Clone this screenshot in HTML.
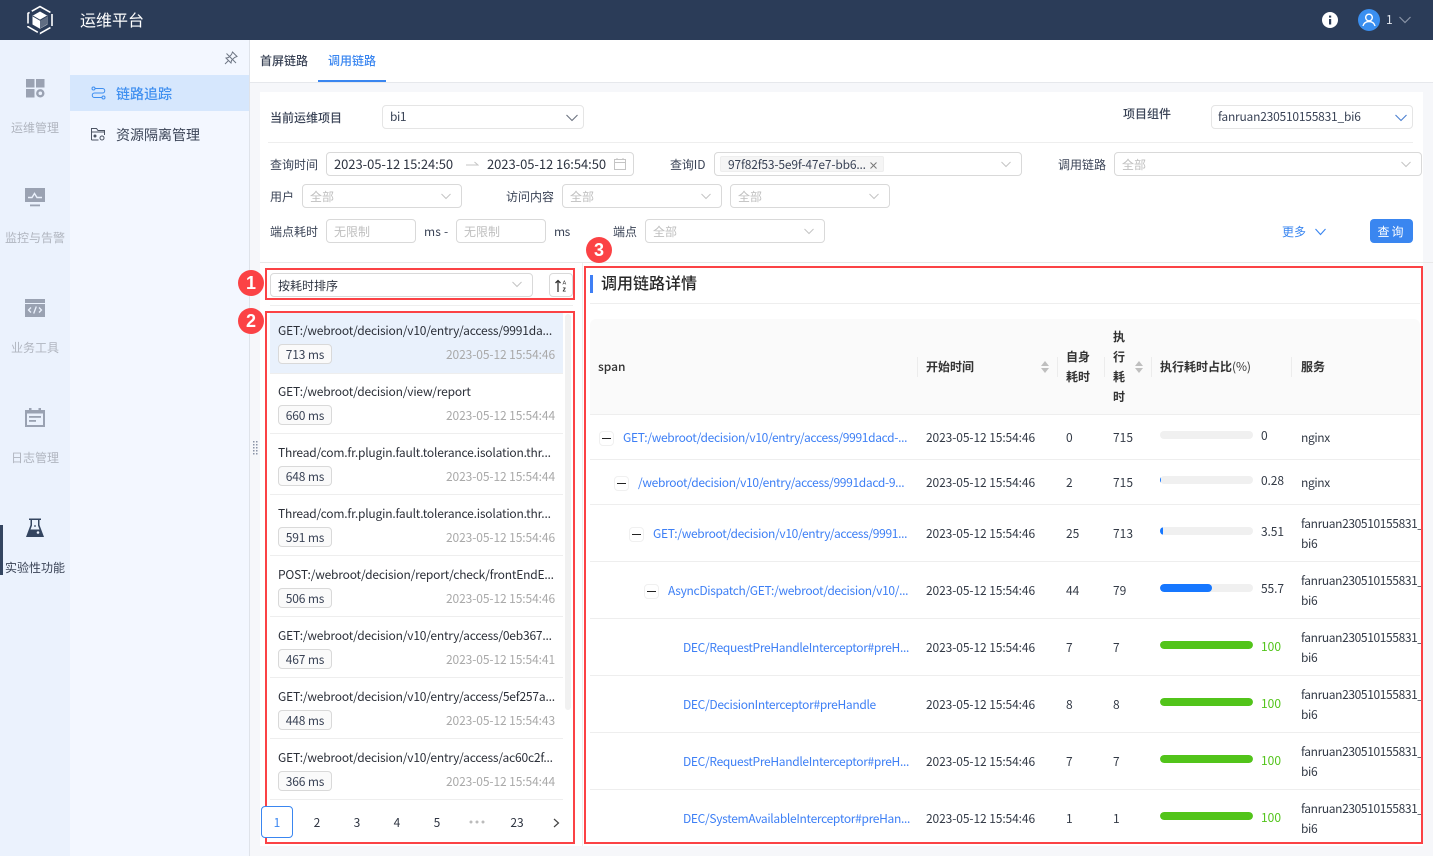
<!DOCTYPE html>
<html lang="zh"><head><meta charset="utf-8"><title>运维平台</title>
<style>
html,body{margin:0;padding:0}
body{width:1433px;height:856px;position:relative;overflow:hidden;background:#f6f7fa;font:12px/20px "Noto Sans CJK SC","Liberation Sans",sans-serif;color:#3a4356}
.a,.t,.b,.s{position:absolute}
.t{white-space:nowrap;line-height:20px}
.b{box-sizing:border-box;border:1px solid #d9d9d9;border-radius:4px;background:#fff}
.s{box-sizing:border-box;border:1px solid #d9d9d9;border-radius:4px;background:#fff;padding-left:7px;line-height:24px;color:#bfbfbf;height:24px;overflow:hidden}
.s svg{position:absolute;right:9px;top:7px}
.lab{color:#3a4356}
.red{position:absolute;box-sizing:border-box;border:2px solid #fb4245;z-index:5}
.badge{position:absolute;width:26px;height:26px;border-radius:50%;background:#fb4245;color:#fff;font:bold 18px/26px "Liberation Sans",sans-serif;text-align:center;z-index:6}
.nav{position:absolute;left:0;width:70px;text-align:center;color:#b0b5bf;white-space:nowrap;line-height:20px}
.line{position:absolute;background:#eeeeee;height:1px}
.title{color:#2b2f38;left:278px;letter-spacing:-.19px}
.tag{position:absolute;left:278px;width:54px;height:20px;box-sizing:border-box;border:1px solid #d9d9d9;border-radius:4px;background:#fafafa;text-align:center;line-height:19px;color:#3a4356;letter-spacing:-.15px}
.date{position:absolute;right:878px;color:#a9a9a9;white-space:nowrap;line-height:20px;letter-spacing:-.1px}
.pg{position:absolute;top:813px;width:30px;text-align:center;line-height:20px;color:#2f3542}
.th{position:absolute;font-weight:700;color:#333;line-height:20px;white-space:nowrap}
.lnk{color:#3d7ff5;letter-spacing:-.32px}
.c{color:#333a46}
.d{letter-spacing:-.1px}
.ex{position:absolute;box-sizing:border-box;width:15px;height:15px;border:1px solid #f0f0f0;border-radius:4px;background:#fff}
.ex:after{content:"";position:absolute;left:2px;right:2px;top:6px;height:1px;background:#222}
.bar{position:absolute;left:1160px;width:93px;height:8px;border-radius:4px;background:#f0f0f0;overflow:hidden}
.bar i{display:block;height:8px;background:#1677ff;border-radius:4px}
.bar i.g{background:#52c41a}
.sv{position:absolute;left:1301px;width:121px;overflow:hidden;white-space:nowrap;line-height:20px;color:#333a46;letter-spacing:-.38px}
.sep{position:absolute;width:1px;height:20px;top:357px;background:#ececec}
</style></head><body>

<div class="a" style="left:0;top:0;width:1433px;height:40px;background:#2b3c58"></div>
<svg class="a" style="left:26px;top:5px" width="28" height="30" viewBox="0 0 28 30" fill="none"><path d="M14 1.5 26 8.3V21.7L14 28.5 2 21.7V8.3Z" stroke="#fff" stroke-width="1.6" stroke-dasharray="12 2.5"/><path d="M14 6.5 21.5 10.8V19.5L14 23.8 6.5 19.5V10.8Z" fill="#fff"/><path d="M14 15.3V23.5L21.3 19.3V11Z" fill="#2b3c58" opacity=".75"/><path d="M6.8 11 14 15.2 21.2 11" stroke="#2b3c58" stroke-width="1"/></svg>
<div class="t" style="left:80px;top:9px;font-size:16px;color:#fff">运维平台</div>
<svg class="a" style="left:1322px;top:12px" width="16" height="16" viewBox="0 0 16 16"><circle cx="8" cy="8" r="8" fill="#fff"/><rect x="7" y="7" width="2.2" height="5.5" fill="#2b3c58"/><rect x="7" y="3.6" width="2.2" height="2" fill="#2b3c58"/></svg>
<svg class="a" style="left:1358px;top:9px" width="22" height="22" viewBox="0 0 22 22" fill="none"><circle cx="11" cy="11" r="11" fill="#3a8ff0"/><circle cx="11" cy="8.5" r="3.3" stroke="#fff" stroke-width="1.4"/><path d="M5 17c.8-3 3-4.4 6-4.4s5.200 1.400 6 4.400" stroke="#fff" stroke-width="1.4"/></svg>
<div class="t" style="left:1386px;top:10px;color:#e4e8ef">1</div>
<svg class="a" style="left:1399px;top:16px" width="12" height="8" viewBox="0 0 12 8" fill="none"><path d="M.5 1 6 6.500 11.500 1" stroke="#8a94a6" stroke-width="1.200"/></svg>

<div class="a" style="left:0;top:40px;width:70px;height:816px;background:#ebf2fd"></div>
<div class="a" style="left:70px;top:40px;width:179px;height:816px;background:#f3f7ff"></div>
<div class="a" style="left:249px;top:40px;width:1px;height:816px;background:#dfe3ea"></div>

<svg class="a" style="left:25px;top:78px" width="21" height="20" viewBox="0 0 21 20" fill="#9aa2b2"><rect x="1" y="1" width="8.500" height="8.500"/><rect x="11" y="1" width="8.500" height="8.500"/><rect x="1" y="11" width="8.500" height="8.500"/><circle cx="15.300" cy="15.300" r="3" fill="none" stroke="#9aa2b2" stroke-width="2.400"/></svg>
<div class="nav" style="top:118px">运维管理</div>
<svg class="a" style="left:25px;top:188px" width="20" height="20" viewBox="0 0 20 20"><rect width="20" height="14" fill="#9aa2b2"/><path d="M3 9.500h4l2.500-4 2.500 4h5" fill="none" stroke="#ebf2fd" stroke-width="1.400"/><rect x="5" y="16.500" width="10" height="1.800" fill="#9aa2b2"/></svg>
<div class="nav" style="top:228px">监控与告警</div>
<svg class="a" style="left:25px;top:298px" width="20" height="20" viewBox="0 0 20 20" fill="none"><rect y="1" width="20" height="18" fill="#9aa2b2"/><rect y="5" width="20" height="1" fill="#ebf2fd"/><path d="M6 9.500 3.500 12 6 14.500M14 9.500l2.500 2.500-2.500 2.500M11.300 8.500 8.700 15.500" stroke="#ebf2fd" stroke-width="1.300"/></svg>
<div class="nav" style="top:338px">业务工具</div>
<svg class="a" style="left:25px;top:407px" width="20" height="21" viewBox="0 0 20 21" fill="none"><rect y="3" width="20" height="17" fill="#9aa2b2"/><rect x="4" y="1" width="2.500" height="4" fill="#9aa2b2"/><rect x="13.500" y="1" width="2.500" height="4" fill="#9aa2b2"/><rect x="2" y="6.500" width="16" height="11.500" fill="#ebf2fd"/><rect x="4" y="9" width="12" height="1.800" fill="#9aa2b2"/><rect x="4" y="13" width="7" height="1.800" fill="#9aa2b2"/></svg>
<div class="nav" style="top:448px">日志管理</div>
<div class="a" style="left:0;top:525px;width:3px;height:50px;background:#344560"></div>
<svg class="a" style="left:26px;top:518px" width="18" height="20" viewBox="0 0 18 20"><path d="M3 .500h12v1.500h-1.500v5L18 19H0L4.500 7V2H3Z" fill="#344560"/><path d="M6 2h6v5.500l1.500 4H4.500l1.500-4Z" fill="#ebf2fd"/><circle cx="9" cy="8" r=".9" fill="#344560"/><circle cx="12" cy="14.500" r="1.300" fill="#ebf2fd"/></svg>
<div class="nav" style="top:558px;color:#3a4356">实验性功能</div>

<svg class="a" style="left:224px;top:51px" width="14" height="14" viewBox="0 0 14 14" fill="none" stroke="#6f7785" stroke-width="1"><path d="M8.500 1 13 5.500 10.500 6.500 7.500 9.500 7 12 2 7 4.500 6.500 7.500 3.500Z"/><path d="M4.500 9.500 1 13"/><path d="M2.500 2.500 12 12"/></svg>
<div class="a" style="left:70px;top:75px;width:179px;height:36px;background:#d6e7fd"></div>
<svg class="a" style="left:91px;top:86px" width="15" height="14" viewBox="0 0 15 14" fill="none" stroke="#3f8ff0" stroke-width="1"><circle cx="2.500" cy="2.500" r="1.500"/><path d="M4 2.500h7.500a2 2 0 0 1 0 4.500H3.500a2 2 0 0 0 0 4.500H11"/><circle cx="12.500" cy="11.500" r="1.500"/></svg>
<div class="t" style="left:116px;top:84px;font-size:14px;color:#3f8ff0;font-weight:500">链路追踪</div>
<svg class="a" style="left:91px;top:127px" width="14" height="14" viewBox="0 0 14 14" fill="none" stroke="#4b5363" stroke-width="1"><path d="M.500 13V1.500h5l1.500 2h6.500V8M.500 13h7"/><path d="M.500 5h13"/><circle cx="4" cy="9" r="1" fill="#4b5363"/><circle cx="11" cy="11" r="2"/></svg>
<div class="t" style="left:116px;top:125px;font-size:14px">资源隔离管理</div>

<div class="a" style="left:250px;top:40px;width:1183px;height:42px;background:#fff"></div>
<div class="a" style="left:250px;top:82px;width:1183px;height:1px;background:#e6e8ec"></div>
<div class="t" style="left:260px;top:51px;font-weight:500;color:#3a4356">首屏链路</div>
<div class="t" style="left:328px;top:51px;font-weight:500;color:#3a86f0">调用链路</div>
<div class="a" style="left:318px;top:80px;width:68px;height:2px;background:#3a86f0"></div>

<div class="a" style="left:260px;top:92px;width:1163px;height:754px;background:#fff"></div>

<div class="t lab" style="left:270px;top:108px;font-weight:500">当前运维项目</div>
<div class="s" style="left:382px;top:105px;width:202px;color:#3a4356;border-color:#e5e5e5;line-height:22px;letter-spacing:-.4px">bi1<svg width="12" height="8" viewBox="0 0 12 8" fill="none" style="right:5px;top:8px"><path d="M.5 1 6 6.500 11.500 1" stroke="#6b7280" stroke-width="1.100"/></svg></div>
<div class="t lab" style="left:1123px;top:104px;font-weight:500">项目组件</div>
<div class="s" style="left:1211px;top:105px;width:202px;color:#3a4356;border-color:#e5e5e5;padding-left:6px;line-height:22px;letter-spacing:-.22px">fanruan230510155831_bi6<svg width="12" height="8" viewBox="0 0 12 8" fill="none" style="right:5px;top:8px"><path d="M.5 1 6 6.500 11.500 1" stroke="#4a7fd0" stroke-width="1.100"/></svg></div>
<div class="a" style="left:268px;top:142px;width:1145px;height:1px;background:#eeeeee"></div>

<div class="t lab" style="left:270px;top:155px">查询时间</div>
<div class="b" style="left:326px;top:152px;width:308px;height:24px"></div>
<div class="t" style="left:334px;top:154px;color:#2f3542;font-size:13px;letter-spacing:-.06px">2023-05-12 15:24:50</div>
<div class="t" style="left:487px;top:154px;color:#2f3542;font-size:13px;letter-spacing:-.06px">2023-05-12 16:54:50</div>
<svg class="a" style="left:466px;top:160px" width="13" height="8" viewBox="0 0 13 8" fill="none"><path d="M0 5h12L8.500 2" stroke="#c4c4c4"/></svg>
<svg class="a" style="left:614px;top:158px" width="12" height="12" viewBox="0 0 12 12" fill="none" stroke="#c4c4c4"><rect x=".5" y="1.500" width="11" height="10"/><path d="M.5 4.500h11M3 0v2M9 0v2"/></svg>
<div class="t lab" style="left:670px;top:155px;letter-spacing:-.1px">查询ID</div>
<div class="s" style="left:714px;top:152px;width:308px"><svg width="10" height="7" viewBox="0 0 10 7" fill="none" style="top:8px;right:10px"><path d="M.5 1 5 5.500 9.500 1" stroke="#c4c4c4"/></svg></div>
<div class="a" style="left:720px;top:156px;width:164px;height:16px;background:#f5f5f5;border:1px solid #eee;box-sizing:border-box;border-radius:2px"></div>
<div class="t" style="left:728px;top:155px;color:#3a4356;letter-spacing:-.17px">97f82f53-5e9f-47e7-bb6...</div>
<svg class="a" style="left:870px;top:162px" width="7" height="7" viewBox="0 0 7 7" fill="none"><path d="M.5.500l6 6M6.500.500l-6 6" stroke="#777"/></svg>
<div class="t lab" style="left:1058px;top:155px">调用链路</div>
<div class="s" style="left:1114px;top:152px;width:308px">全部<svg width="10" height="7" viewBox="0 0 10 7" fill="none" style="top:8px;right:10px"><path d="M.5 1 5 5.500 9.500 1" stroke="#c4c4c4"/></svg></div>

<div class="t lab" style="left:270px;top:187px">用户</div>
<div class="s" style="left:302px;top:184px;width:160px">全部<svg width="10" height="7" viewBox="0 0 10 7" fill="none" style="top:8px;right:10px"><path d="M.5 1 5 5.500 9.500 1" stroke="#c4c4c4"/></svg></div>
<div class="t lab" style="left:506px;top:187px">访问内容</div>
<div class="s" style="left:562px;top:184px;width:160px">全部<svg width="10" height="7" viewBox="0 0 10 7" fill="none" style="top:8px;right:10px"><path d="M.5 1 5 5.500 9.500 1" stroke="#c4c4c4"/></svg></div>
<div class="s" style="left:730px;top:184px;width:160px">全部<svg width="10" height="7" viewBox="0 0 10 7" fill="none" style="top:8px;right:10px"><path d="M.5 1 5 5.500 9.500 1" stroke="#c4c4c4"/></svg></div>

<div class="t lab" style="left:270px;top:222px">端点耗时</div>
<div class="s" style="left:326px;top:219px;width:90px">无限制</div>
<div class="t lab" style="left:424px;top:222px;letter-spacing:.2px">ms -</div>
<div class="s" style="left:456px;top:219px;width:90px">无限制</div>
<div class="t lab" style="left:554px;top:222px;letter-spacing:-.5px">ms</div>
<div class="t lab" style="left:613px;top:222px">端点</div>
<div class="s" style="left:645px;top:219px;width:180px">全部<svg width="10" height="7" viewBox="0 0 10 7" fill="none" style="top:8px;right:10px"><path d="M.5 1 5 5.500 9.500 1" stroke="#c4c4c4"/></svg></div>
<div class="t" style="left:1282px;top:222px;color:#3a86f0">更多</div>
<svg class="a" style="left:1315px;top:228px" width="11" height="8" viewBox="0 0 11 8" fill="none"><path d="M.5 1 5.500 6.500 10.500 1" stroke="#3a86f0" stroke-width="1.100"/></svg>
<div class="a" style="left:1370px;top:219px;width:43px;height:24px;background:#3a86f0;border-radius:4px;color:#fff;text-align:center;line-height:26px;letter-spacing:2px">查询</div>

<div class="a" style="left:260px;top:262px;width:1173px;height:1px;background:#e8e8e8"></div>
<div class="a" style="left:582px;top:263px;width:1px;height:583px;background:#eeeeee"></div>

<div class="s" style="left:270px;top:273px;width:263px;color:#2f3542">按耗时排序<svg width="10" height="7" viewBox="0 0 10 7" fill="none" style="top:7px;right:10px"><path d="M.5 1 5 5.500 9.500 1" stroke="#c4c4c4"/></svg></div>
<div class="b" style="left:549px;top:273px;width:24px;height:24px"></div>
<svg class="a" style="left:555px;top:279px" width="13" height="13" viewBox="0 0 13 13" fill="none"><path d="M3 13V1.500M.5 4 3 1.500 5.500 4" stroke="#333" stroke-width="1.300"/><text x="7.500" y="5.500" font-size="5.500" font-family="Liberation Sans" fill="#333">A</text><text x="7.500" y="12.500" font-size="7" font-weight="bold" font-family="Liberation Sans" fill="#333">z</text></svg>
<div class="line" style="left:270px;top:305px;width:303px"></div>

<div class="a" style="left:270px;top:313px;width:293px;height:60px;background:#e9f1fc"></div>
<div class="a" style="left:565px;top:314px;width:6px;height:396px;background:#f1f1f1;border-radius:3px"></div>

<div class="t title" style="top:321px">GET:/webroot/decision/v10/entry/access/9991da...</div>
<div class="tag" style="top:344px">713 ms</div><div class="date" style="top:345px">2023-05-12 15:54:46</div>
<div class="line" style="left:270px;top:373px;width:293px"></div>
<div class="t title" style="top:382px">GET:/webroot/decision/view/report</div>
<div class="tag" style="top:405px">660 ms</div><div class="date" style="top:406px">2023-05-12 15:54:44</div>
<div class="line" style="left:270px;top:433px;width:293px"></div>
<div class="t title" style="top:443px">Thread/com.fr.plugin.fault.tolerance.isolation.thr...</div>
<div class="tag" style="top:466px">648 ms</div><div class="date" style="top:467px">2023-05-12 15:54:44</div>
<div class="line" style="left:270px;top:494px;width:293px"></div>
<div class="t title" style="top:504px">Thread/com.fr.plugin.fault.tolerance.isolation.thr...</div>
<div class="tag" style="top:527px">591 ms</div><div class="date" style="top:528px">2023-05-12 15:54:46</div>
<div class="line" style="left:270px;top:555px;width:293px"></div>
<div class="t title" style="top:565px">POST:/webroot/decision/report/check/frontEndE...</div>
<div class="tag" style="top:588px">506 ms</div><div class="date" style="top:589px">2023-05-12 15:54:46</div>
<div class="line" style="left:270px;top:616px;width:293px"></div>
<div class="t title" style="top:626px">GET:/webroot/decision/v10/entry/access/0eb367...</div>
<div class="tag" style="top:649px">467 ms</div><div class="date" style="top:650px">2023-05-12 15:54:41</div>
<div class="line" style="left:270px;top:677px;width:293px"></div>
<div class="t title" style="top:687px">GET:/webroot/decision/v10/entry/access/5ef257a...</div>
<div class="tag" style="top:710px">448 ms</div><div class="date" style="top:711px">2023-05-12 15:54:43</div>
<div class="line" style="left:270px;top:738px;width:293px"></div>
<div class="t title" style="top:748px">GET:/webroot/decision/v10/entry/access/ac60c2f...</div>
<div class="tag" style="top:771px">366 ms</div><div class="date" style="top:772px">2023-05-12 15:54:44</div>
<div class="line" style="left:270px;top:799px;width:293px"></div>

<div class="a" style="left:261px;top:806px;width:32px;height:32px;box-sizing:border-box;border:1px solid #3a86f0;border-radius:4px;background:#fff;z-index:7;text-align:center;line-height:31px;color:#3a86f0">1</div>
<div class="pg" style="left:302px">2</div><div class="pg" style="left:342px">3</div><div class="pg" style="left:382px">4</div><div class="pg" style="left:422px">5</div>
<svg class="a" style="left:469px;top:820px" width="16" height="4" viewBox="0 0 16 4" fill="#bbb"><circle cx="2" cy="2" r="1.500"/><circle cx="8" cy="2" r="1.500"/><circle cx="14" cy="2" r="1.500"/></svg>
<div class="pg" style="left:502px">23</div>
<svg class="a" style="left:553px;top:818px" width="7" height="10" viewBox="0 0 7 10" fill="none"><path d="M1 1 5.500 5 1 9" stroke="#444" stroke-width="1.200"/></svg>

<div class="a" style="left:590px;top:275px;width:3px;height:18px;background:#3f7ff5"></div>
<div class="t" style="left:601px;top:272px;font-size:16px;font-weight:500;color:#262626">调用链路详情</div>
<div class="line" style="left:590px;top:303px;width:830px"></div>

<div class="a" style="left:590px;top:319px;width:830px;height:95px;background:#fafafa;border-radius:6px 6px 0 0;border-bottom:1px solid #eee"></div>
<div class="th" style="left:598px;top:357px;font-weight:500">span</div>
<div class="sep" style="left:917px"></div>
<div class="th" style="left:926px;top:357px">开始时间</div>
<svg class="a" style="left:1041px;top:361px" width="8" height="12" viewBox="0 0 8 12" fill="#bfbfbf"><path d="M4 0 8 5H0ZM4 12 0 7H8Z"/></svg>
<div class="sep" style="left:1057px"></div>
<div class="th" style="left:1066px;top:347px">自身</div>
<div class="th" style="left:1066px;top:367px">耗时</div>
<div class="sep" style="left:1104px"></div>
<div class="th" style="left:1113px;top:327px">执</div>
<div class="th" style="left:1113px;top:347px">行</div>
<div class="th" style="left:1113px;top:367px">耗</div>
<div class="th" style="left:1113px;top:387px">时</div>
<svg class="a" style="left:1135px;top:361px" width="8" height="12" viewBox="0 0 8 12" fill="#bfbfbf"><path d="M4 0 8 5H0ZM4 12 0 7H8Z"/></svg>
<div class="sep" style="left:1151px"></div>
<div class="th" style="left:1160px;top:357px">执行耗时占比<span style="font-weight:400;letter-spacing:-.1px">(%)</span></div>
<div class="sep" style="left:1291px"></div>
<div class="th" style="left:1301px;top:357px">服务</div>

<div class="line" style="left:590px;top:459px;width:830px"></div>
<div class="line" style="left:590px;top:504px;width:830px"></div>
<div class="line" style="left:590px;top:561px;width:830px"></div>
<div class="line" style="left:590px;top:618px;width:830px"></div>
<div class="line" style="left:590px;top:675px;width:830px"></div>
<div class="line" style="left:590px;top:732px;width:830px"></div>
<div class="line" style="left:590px;top:789px;width:830px"></div>

<div class="ex" style="left:599px;top:431px"></div>
<div class="t lnk" style="left:623px;top:428px">GET:/webroot/decision/v10/entry/access/9991dacd-...</div>
<div class="t c d" style="left:926px;top:428px">2023-05-12 15:54:46</div><div class="t c" style="left:1066px;top:428px">0</div><div class="t c" style="left:1113px;top:428px">715</div>
<div class="bar" style="top:431px"><i style="width:0"></i></div><div class="t c" style="left:1261px;top:426px">0</div>
<div class="sv" style="top:428px">nginx</div>

<div class="ex" style="left:614px;top:476px"></div>
<div class="t lnk" style="left:638px;top:473px">/webroot/decision/v10/entry/access/9991dacd-9...</div>
<div class="t c d" style="left:926px;top:473px">2023-05-12 15:54:46</div><div class="t c" style="left:1066px;top:473px">2</div><div class="t c" style="left:1113px;top:473px">715</div>
<div class="bar" style="top:476px"><i style="width:1px"></i></div><div class="t c d" style="left:1261px;top:471px">0.28</div>
<div class="sv" style="top:473px">nginx</div>

<div class="ex" style="left:629px;top:527px"></div>
<div class="t lnk" style="left:653px;top:524px">GET:/webroot/decision/v10/entry/access/9991...</div>
<div class="t c d" style="left:926px;top:524px">2023-05-12 15:54:46</div><div class="t c" style="left:1066px;top:524px">25</div><div class="t c" style="left:1113px;top:524px">713</div>
<div class="bar" style="top:527px"><i style="width:3px"></i></div><div class="t c d" style="left:1261px;top:522px">3.51</div>
<div class="sv" style="top:514px">fanruan230510155831_<br>bi6</div>

<div class="ex" style="left:644px;top:584px"></div>
<div class="t lnk" style="left:668px;top:581px">AsyncDispatch/GET:/webroot/decision/v10/...</div>
<div class="t c d" style="left:926px;top:581px">2023-05-12 15:54:46</div><div class="t c" style="left:1066px;top:581px">44</div><div class="t c" style="left:1113px;top:581px">79</div>
<div class="bar" style="top:584px"><i style="width:52px"></i></div><div class="t c d" style="left:1261px;top:579px">55.7</div>
<div class="sv" style="top:571px">fanruan230510155831_<br>bi6</div>

<div class="t lnk" style="left:683px;top:638px">DEC/RequestPreHandleInterceptor#preH...</div>
<div class="t c d" style="left:926px;top:638px">2023-05-12 15:54:46</div><div class="t c" style="left:1066px;top:638px">7</div><div class="t c" style="left:1113px;top:638px">7</div>
<div class="bar" style="top:641px"><i class="g" style="width:93px"></i></div><div class="t" style="left:1261px;top:637px;color:#52c41a">100</div>
<div class="sv" style="top:628px">fanruan230510155831_<br>bi6</div>

<div class="t lnk" style="left:683px;top:695px">DEC/DecisionInterceptor#preHandle</div>
<div class="t c d" style="left:926px;top:695px">2023-05-12 15:54:46</div><div class="t c" style="left:1066px;top:695px">8</div><div class="t c" style="left:1113px;top:695px">8</div>
<div class="bar" style="top:698px"><i class="g" style="width:93px"></i></div><div class="t" style="left:1261px;top:694px;color:#52c41a">100</div>
<div class="sv" style="top:685px">fanruan230510155831_<br>bi6</div>

<div class="t lnk" style="left:683px;top:752px">DEC/RequestPreHandleInterceptor#preH...</div>
<div class="t c d" style="left:926px;top:752px">2023-05-12 15:54:46</div><div class="t c" style="left:1066px;top:752px">7</div><div class="t c" style="left:1113px;top:752px">7</div>
<div class="bar" style="top:755px"><i class="g" style="width:93px"></i></div><div class="t" style="left:1261px;top:751px;color:#52c41a">100</div>
<div class="sv" style="top:742px">fanruan230510155831_<br>bi6</div>

<div class="t lnk" style="left:683px;top:809px">DEC/SystemAvailableInterceptor#preHan...</div>
<div class="t c d" style="left:926px;top:809px">2023-05-12 15:54:46</div><div class="t c" style="left:1066px;top:809px">1</div><div class="t c" style="left:1113px;top:809px">1</div>
<div class="bar" style="top:812px"><i class="g" style="width:93px"></i></div><div class="t" style="left:1261px;top:808px;color:#52c41a">100</div>
<div class="sv" style="top:799px">fanruan230510155831_<br>bi6</div>

<svg class="a" style="left:253px;top:441px" width="5" height="14" viewBox="0 0 5 14" fill="#8a93a6"><path d="M0 0h1.500v1.500H0zM3 0h1.500v1.500H3zM0 3h1.500v1.500H0zM3 3h1.500v1.500H3zM0 6h1.500v1.500H0zM3 6h1.500v1.500H3zM0 9h1.500v1.500H0zM3 9h1.500v1.500H3zM0 12h1.500v1.500H0zM3 12h1.500v1.500H3z"/></svg>

<div class="red" style="left:265px;top:268px;width:310px;height:32px"></div>
<div class="red" style="left:265px;top:311px;width:310px;height:533px"></div>
<div class="red" style="left:584px;top:266px;width:839px;height:578px"></div>
<div class="badge" style="left:238px;top:270px">1</div>
<div class="badge" style="left:238px;top:308px">2</div>
<div class="badge" style="left:586px;top:237px">3</div>
</body></html>
